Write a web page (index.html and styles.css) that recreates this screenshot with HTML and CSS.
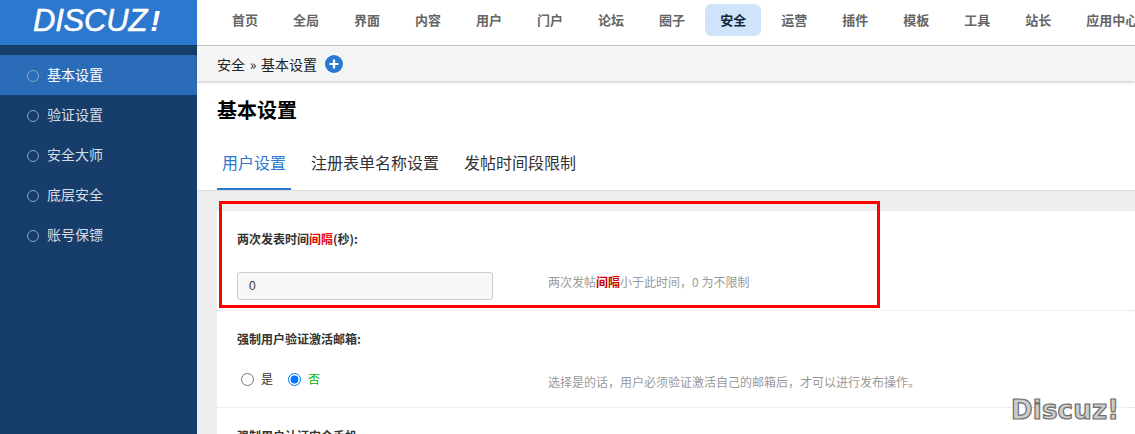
FILE: index.html
```html
<!DOCTYPE html>
<html lang="zh-CN">
<head>
<meta charset="utf-8">
<title>基本设置</title>
<link rel="stylesheet" href="styles.css">
</head>
<body>
<div class="page">
  <aside class="sidebar">
    <div class="logo"><span class="logo-text">DISCUZ</span><span class="logo-bang">!</span></div>
    <ul class="side-menu">
      <li class="side-item is-active">基本设置</li>
      <li class="side-item">验证设置</li>
      <li class="side-item">安全大师</li>
      <li class="side-item">底层安全</li>
      <li class="side-item">账号保镖</li>
    </ul>
  </aside>
  <div class="main">
    <nav class="topnav">
      <a class="nav-item">首页</a>
      <a class="nav-item">全局</a>
      <a class="nav-item">界面</a>
      <a class="nav-item">内容</a>
      <a class="nav-item">用户</a>
      <a class="nav-item">门户</a>
      <a class="nav-item">论坛</a>
      <a class="nav-item">圈子</a>
      <a class="nav-item is-active">安全</a>
      <a class="nav-item">运营</a>
      <a class="nav-item">插件</a>
      <a class="nav-item">模板</a>
      <a class="nav-item">工具</a>
      <a class="nav-item">站长</a>
      <a class="nav-item">应用中心</a>
    </nav>
    <div class="crumbs">
      <span class="crumb-text">安全 » 基本设置</span>
      <svg class="plus" width="18" height="18" viewBox="0 0 18 18" aria-hidden="true">
        <circle cx="9" cy="9" r="9" fill="#2b78ce"/>
        <path d="M9 4.5v9M4.5 9h9" stroke="#fff" stroke-width="2.2"/>
      </svg>
    </div>
    <h1 class="title">基本设置</h1>
    <div class="tabs">
      <a class="tab is-active">用户设置</a>
      <a class="tab">注册表单名称设置</a>
      <a class="tab">发帖时间段限制</a>
    </div>
    <div class="content">
      <div class="panel">
        <section class="row">
          <div class="label">两次发表时间<span class="red">间隔</span>(秒):</div>
          <div class="control control-input">
            <input class="text-input" type="text" value="0">
            <div class="hint hint-first">两次发帖<span class="red-strong">间隔</span>小于此时间，0 为不限制</div>
          </div>
        </section>
        <section class="row">
          <div class="label">强制用户验证激活邮箱:</div>
          <div class="control control-radio">
            <div class="radios">
              <label class="radio"><input type="radio" name="mail">是</label>
              <label class="radio radio-on"><input type="radio" name="mail" checked>否</label>
            </div>
            <div class="hint hint-second">选择是的话，用户必须验证激活自己的邮箱后，才可以进行发布操作。</div>
          </div>
        </section>
        <section class="row">
          <div class="label">强制用户认证安全手机:</div>
        </section>
      </div>
    </div>
  </div>
  <div class="annotation"></div>
  <div class="watermark">Discuz!</div>
</div>
</body>
</html>
```
FILE: styles.css
```css
* { box-sizing: border-box; }
html, body { margin: 0; height: 434px; overflow: hidden; background: #fff; }
body { font-family: "Noto Sans CJK SC", "Liberation Sans", sans-serif; color: #222; }
.page { position: relative; display: flex; width: 1135px; height: 434px; overflow: hidden; }

.sidebar { flex: 0 0 197px; background: #173e6a; }
.logo { height: 45px; background: #2b78ce; color: #fff; padding: 2px 0 0 33px; font-family: "Liberation Sans", sans-serif; font-style: italic; line-height: 38px; white-space: nowrap; }
.logo-text { font-size: 31px; letter-spacing: -0.2px; -webkit-text-stroke: 0.5px #fff; }
.logo-bang { font-size: 30px; font-weight: 700; margin-left: 3px; }
.side-menu { list-style: none; margin: 10px 0 0; padding: 0; }
.side-item { position: relative; height: 40px; line-height: 38px; padding-left: 47px; font-size: 14px; color: #d3dce7; }
.side-item::before { content: ""; position: absolute; left: 27px; top: 15px; width: 10px; height: 10px; border: 1px solid #8ea6c2; border-radius: 50%; }
.side-item.is-active { background: #2a6cb8; color: #fff; }

.main { flex: 1; min-width: 0; display: flex; flex-direction: column; }
.topnav { display: flex; gap: 5px; height: 46px; padding: 4px 0 0 20px; border-bottom: 1px solid #ccc; overflow: hidden; flex: none; }
.nav-item { flex: none; height: 32px; line-height: 32px; padding: 0 15px; font-size: 13px; font-weight: 700; color: #666; border-radius: 6px; }
.nav-item.is-active { background: #cfe3fa; color: #12253c; }

.crumbs { display: flex; align-items: center; gap: 8px; height: 35px; padding-left: 20px; background: #f5f5f5; font-size: 14px; color: #222; box-shadow: 0 1px 3px rgba(0,0,0,.25); position: relative; flex: none; }
.crumb-text { word-spacing: 1.5px; }
.plus { display: block; }

.title { margin: 0; padding-left: 20px; height: 58px; line-height: 58px; font-size: 20px; font-weight: 700; color: #000; flex: none; }

.tabs { display: flex; gap: 15px; height: 52px; padding-left: 20px; border-bottom: 1px solid #ddd; flex: none; }
.tab { height: 51px; line-height: 46px; padding: 0 5px; font-size: 16px; color: #333; border-bottom: 2px solid transparent; }
.tab.is-active { color: #2b78ce; border-bottom-color: #2b78ce; }

.content { flex: 1; min-height: 0; padding: 20px 0 0 20px; background: #eee; }
.panel { height: 100%; background: #fff; }
.row { padding: 20px 0 0 20px; border-bottom: 1px dotted #d8dfe6; }
.row:last-child { border-bottom: 0; }
.label { height: 18px; line-height: 16px; font-size: 12px; font-weight: 700; color: #333; }
.red { color: #e00000; }
.red-strong { color: #c80000; font-weight: 700; }

.control { display: flex; align-items: flex-start; }
.control-input { margin-top: 23px; padding-bottom: 10px; }
.control-radio { margin-top: 16px; height: 42px; }
.text-input { flex: 0 0 256px; height: 28px; margin: 0 55px 0 0; padding: 0 11px; border: 1px solid #ccc; border-radius: 3px; background: #f8f8f8; font: 12px "Liberation Sans", sans-serif; color: #333; outline: 0; }
.radios { flex: 0 0 256px; margin-right: 55px; display: flex; gap: 15px; height: 26px; align-items: center; padding-left: 4px; }
.radio { display: flex; align-items: center; gap: 7px; font-size: 12px; color: #333; }
.radio input { margin: 2px 0 0; width: 13px; height: 13px; }
.radio-on { color: #00b400; }
.hint { font-size: 12px; line-height: 18px; color: #999; white-space: nowrap; }
.hint-first { margin-top: 1px; }
.hint-second { margin-top: 8px; }

.annotation { position: absolute; left: 219px; top: 201px; width: 661px; height: 107px; border: 3px solid #f00; }
.watermark { position: absolute; left: 1011px; top: 392px; font-family: "DejaVu Sans", sans-serif; font-weight: 700; font-size: 26px; line-height: 36px; letter-spacing: 0.2px; color: #ccc; -webkit-text-stroke: 1.2px #6e6e6e; }
```
